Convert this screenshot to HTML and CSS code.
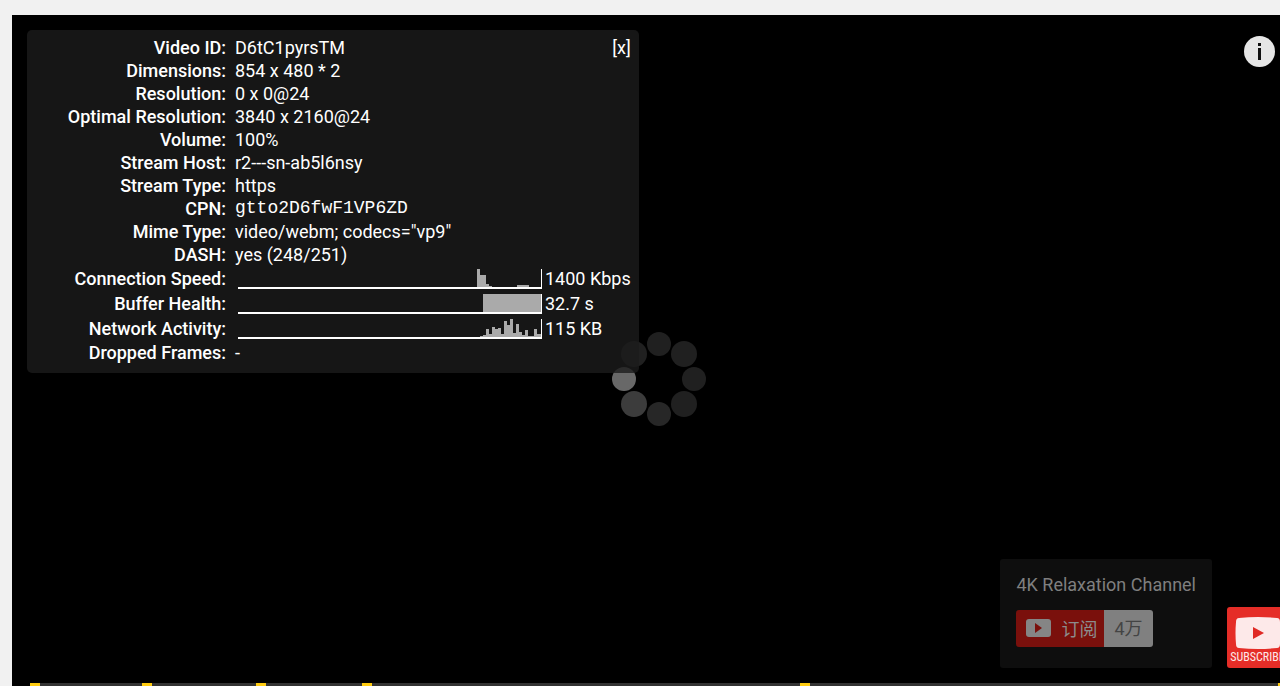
FILE: index.html
```html
<!DOCTYPE html>
<html lang="en">
<head>
    <meta charset="UTF-8">
    <title>Video Player</title>
    <link rel="stylesheet" href="styles.css">
</head>
<body>

<div class="player">
    <svg class="spinner" viewBox="0 0 96 96" aria-label="Loading">
        <circle cx="48" cy="13" r="12" fill="#202020"/>
        <circle cx="73" cy="23" r="13" fill="#202020"/>
        <circle cx="83" cy="48" r="12" fill="#202020"/>
        <circle cx="73" cy="73" r="13" fill="#202020"/>
        <circle cx="48" cy="83" r="12" fill="#272727"/>
        <circle cx="23" cy="73" r="13" fill="#3c3c3c"/>
        <circle cx="13" cy="48" r="12" fill="#686868"/>
        <circle cx="23" cy="23" r="13" fill="#202020"/>
    </svg>

    <div class="stats">
        <button class="close" aria-label="Close">[x]</button>
        <dl class="stats-list">
            <div class="row"><dt>Video ID:</dt><dd>D6tC1pyrsTM</dd></div>
            <div class="row"><dt>Dimensions:</dt><dd>854 x 480 * 2</dd></div>
            <div class="row"><dt>Resolution:</dt><dd>0 x 0@24</dd></div>
            <div class="row"><dt>Optimal Resolution:</dt><dd>3840 x 2160@24</dd></div>
            <div class="row"><dt>Volume:</dt><dd>100%</dd></div>
            <div class="row"><dt>Stream Host:</dt><dd>r2---sn-ab5l6nsy</dd></div>
            <div class="row"><dt>Stream Type:</dt><dd>https</dd></div>
            <div class="row"><dt>CPN:</dt><dd class="cpn">gtto2D6fwF1VP6ZD</dd></div>
            <div class="row"><dt>Mime Type:</dt><dd>video/webm; codecs="vp9"</dd></div>
            <div class="row"><dt>DASH:</dt><dd>yes (248/251)</dd></div>
            <div class="row graph">
                <dt>Connection Speed:</dt>
                <dd>
                    <svg class="spark" viewBox="0 0 304 20">
                        <path fill="#aaa" d="M239 18V0h3v6h6v9h3v2h3v1zM279 18v-2h12v2z"/>
                        <path fill="#fff" d="M0 18h303V0h1v20H0z"/>
                    </svg>
                    <span>1400 Kbps</span>
                </dd>
            </div>
            <div class="row graph">
                <dt>Buffer Health:</dt>
                <dd>
                    <svg class="spark" viewBox="0 0 304 20">
                        <path fill="#aaa" d="M245 0h58v18h-58z"/>
                        <path fill="#fff" d="M0 18h303V0h1v20H0z"/>
                    </svg>
                    <span>32.7 s</span>
                </dd>
            </div>
            <div class="row graph">
                <dt>Network Activity:</dt>
                <dd>
                    <svg class="spark" viewBox="0 0 304 20">
                        <path fill="#aaa" d="M242 18V17h3V16h3V10h3V15h3V8h3V10h3V9h3V15h3V2h3V6h3V0h3V14h3V5h3V13h3V16h3V11h3V17h6V10h3V15h4V18z"/>
                        <path fill="#fff" d="M0 18h303V0h1v20H0z"/>
                    </svg>
                    <span>115 KB</span>
                </dd>
            </div>
            <div class="row"><dt>Dropped Frames:</dt><dd>-</dd></div>
        </dl>
    </div>

    <button class="info" aria-label="Info">
        <svg viewBox="0 0 31 31">
            <circle cx="15.5" cy="15.5" r="15.5" fill="#e6e6e6"/>
            <path fill="#111" d="M14 7h3v3h-3zM14 12h3v12h-3z"/>
        </svg>
    </button>

    <div class="branding">
        <div class="card">
            <div class="channel">4K Relaxation Channel</div>
            <div class="sub-group" lang="zh-CN">
                <button class="sub-button">
                    <svg viewBox="0 0 25 18">
                        <rect width="25" height="18" rx="3" fill="#858585"/>
                        <path fill="#7a100c" d="M9 4l7 5-7 5z"/>
                    </svg>
                    订阅
                </button>
                <span class="sub-count">4万</span>
            </div>
        </div>
        <button class="watermark">
            <svg viewBox="0 0 46 32">
                <path fill="#fde9e9" d="M4 1Q23-1 42 1q3 0 3 4 1 11 0 22 0 4-3 4-19 2-38 0-3 0-3-4-1-11 0-22 0-4 3-4z"/>
                <path fill="#e02a25" d="M18 10l11 6-11 6z"/>
            </svg>
            <span>SUBSCRIBE</span>
        </button>
    </div>

    <div class="progress">
        <span class="marker" style="left: 0%"></span>
        <span class="marker" style="left: 8.9%"></span>
        <span class="marker" style="left: 18%"></span>
        <span class="marker" style="left: 26.4%"></span>
        <span class="marker" style="left: 61.2%"></span>
        <span class="marker" style="left: 99.2%"></span>
    </div>
</div>

</body>
</html>
```

FILE: styles.css
```css
* {
    margin: 0;
    padding: 0;
    box-sizing: border-box;
}

body {
    height: 100vh;
    padding: 15px 0 0 12px;
    overflow: hidden;
    background: #f1f1f1;
    font-family: Roboto, "Noto Sans CJK SC", sans-serif;
    font-size: 18px;
}

button {
    border: 0;
    background: none;
    font: inherit;
    color: inherit;
    cursor: pointer;
}

svg {
    display: block;
}

/* The player runs a little past the right edge of the window */
.player {
    position: relative;
    display: flex;
    align-items: center;
    justify-content: center;
    margin-right: -26px;
    aspect-ratio: 16 / 9;
    background: #000;
}

.spinner {
    width: 96px;
    height: 96px;
}

/* Stats for nerds */
.stats {
    position: absolute;
    top: 15px;
    left: 15px;
    padding: 6px 8px 9px 0;
    border-radius: 5px;
    background: rgba(28, 28, 28, 0.8);
    color: #fff;
}

.row {
    display: flex;
    line-height: 23px;
}

.row dt {
    width: 199px;
    margin-right: 9px;
    font-weight: 500;
    text-align: right;
}

.row dd {
    display: flex;
}

.graph {
    line-height: 25px;
}

.graph dd {
    align-items: center;
    gap: 3px;
}

.cpn {
    font-family: "Liberation Mono", monospace;
}

.spark {
    width: 304px;
    height: 20px;
    margin-left: 3px;
}

.close {
    position: absolute;
    top: 6px;
    right: 8px;
    line-height: 23px;
}

.info {
    position: absolute;
    top: 21px;
    right: 31px;
    width: 31px;
    height: 31px;
}

/* Channel card and watermark */
.branding {
    position: absolute;
    right: 18px;
    bottom: 75px;
    display: flex;
    align-items: flex-end;
    gap: 15px;
}

.card {
    padding: 15px 16px 21px;
    border-radius: 3px;
    background: #0e0e0e;
}

.channel {
    margin-bottom: 15px;
    line-height: 21px;
    color: #7f7f7f;
}

.sub-group {
    display: flex;
    width: max-content;
    height: 37px;
    border-radius: 3px;
    overflow: hidden;
}

.sub-button {
    display: flex;
    align-items: center;
    gap: 10px;
    padding: 0 7px 0 10px;
    background: #7a100c;
    color: #8c8c8c;
}

.sub-button svg {
    width: 25px;
    height: 18px;
}

.sub-count {
    padding: 0 10px;
    line-height: 37px;
    background: #808080;
    color: #444;
}

.watermark {
    display: flex;
    flex-direction: column;
    align-items: center;
    width: 61px;
    height: 61px;
    padding-top: 10px;
    border-radius: 3px;
    overflow: hidden;
    background: #e52d27;
    color: #fde9e9;
}

.watermark svg {
    width: 46px;
    height: 32px;
}

.watermark span {
    font: 12px/17px "Roboto Condensed", "Liberation Sans Narrow", Roboto, sans-serif;
}

.progress {
    position: absolute;
    right: 18px;
    bottom: 55px;
    left: 18px;
    height: 5px;
    background: #333;
}

.marker {
    position: absolute;
    width: 10px;
    height: 5px;
    background: #fc1;
}
```
